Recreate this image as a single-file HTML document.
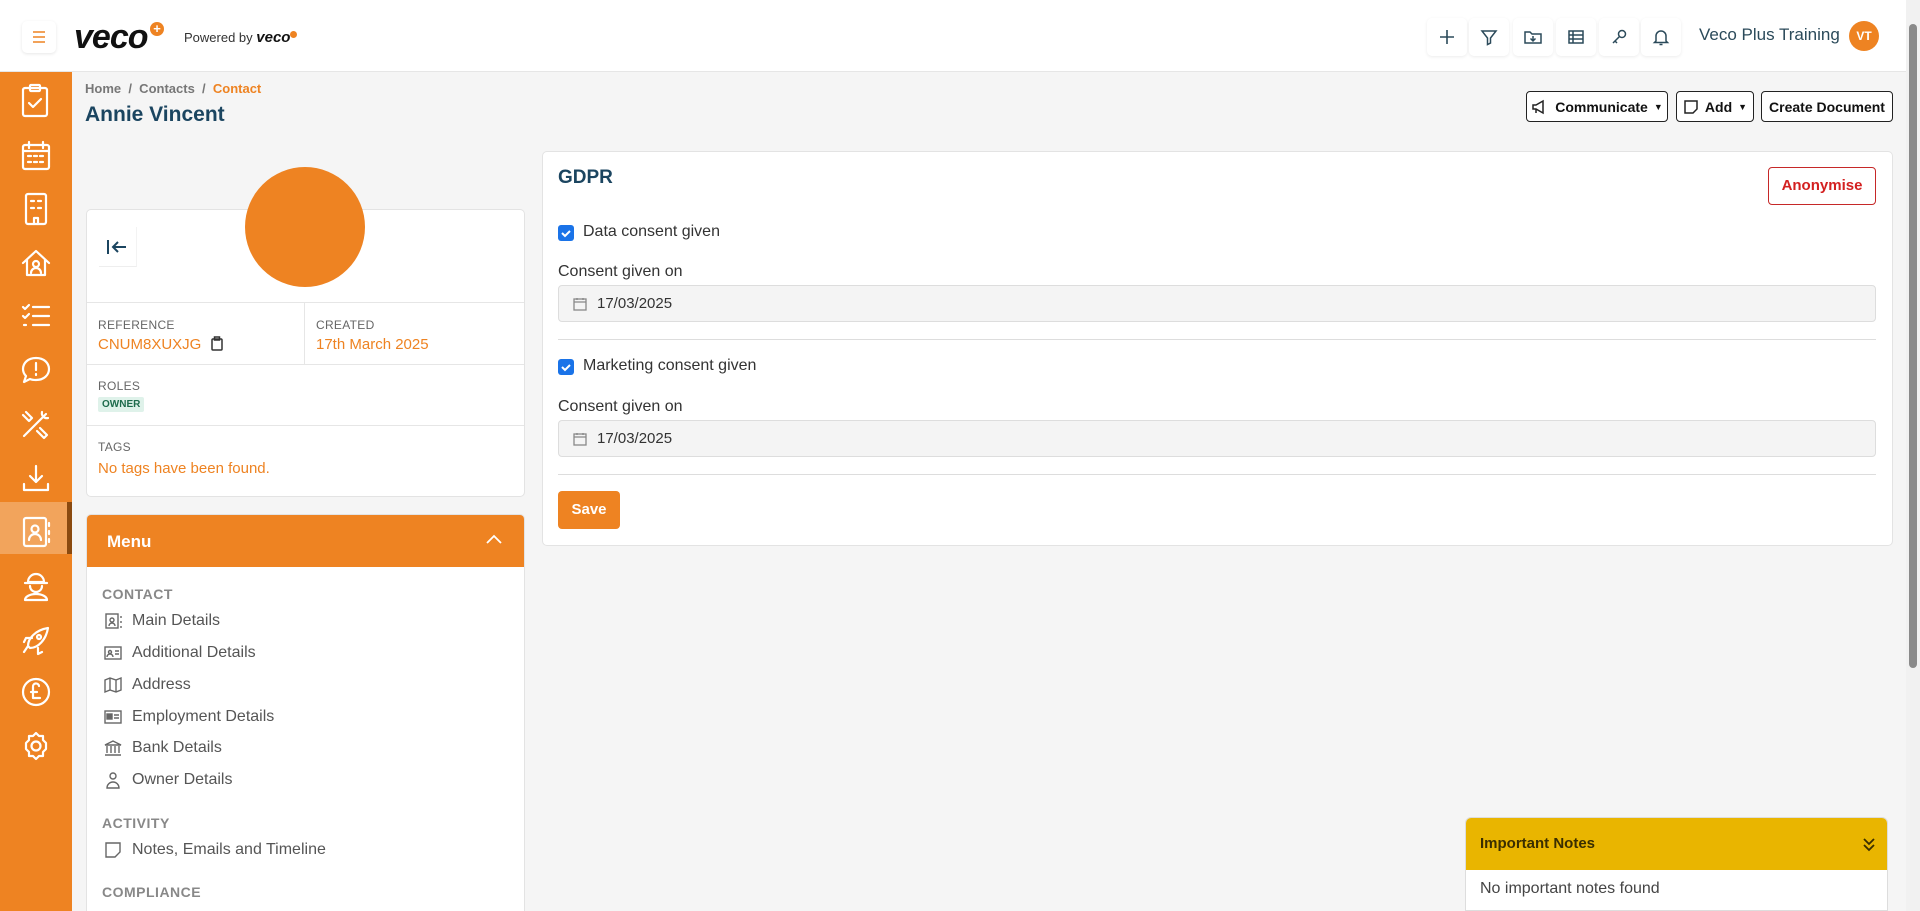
<!DOCTYPE html>
<html style="width:1920px;height:911px;overflow:hidden"><head><meta charset="utf-8"><style>
*{box-sizing:border-box;margin:0;padding:0}
body{width:1920px;height:911px;overflow:hidden;background:#f5f5f5;font-family:"Liberation Sans",sans-serif;position:relative;color:#333}
.a{position:absolute}
.hdr{left:0;top:0;width:1906px;height:72px;background:#fff;border-bottom:1px solid #e6e6e6}
.side{left:0;top:72px;width:72px;height:839px;background:#ee8322}
.ib{position:absolute;top:18px;width:40px;height:38px;background:#fff;border-radius:5px;box-shadow:0 1px 3px rgba(0,0,0,.08)}
.ib svg{position:absolute;left:10px;top:9px}
.card{background:#fff;border:1px solid #e3e3e3;border-radius:5px}
.lbl{font-size:12px;color:#666;letter-spacing:.3px}
.or{color:#ee8322}
.btn{background:#fff;border:1.5px solid #222;border-radius:4px;font-weight:bold;font-size:14px;color:#111;display:flex;align-items:center;justify-content:center;gap:6px}
.mi{position:absolute;left:104px;font-size:16px;color:#555;display:flex;align-items:center;gap:10px}
.mh{position:absolute;left:102px;font-size:14px;color:#888;font-weight:bold;letter-spacing:.5px}
.inp{position:absolute;left:558px;width:1318px;height:37px;background:#f4f4f4;border:1px solid #ddd;border-radius:4px;font-size:15px;color:#333;display:flex;align-items:center;padding-left:14px;gap:10px}
.chk{position:absolute;left:558px;width:16px;height:16px;background:#1a73e8;border-radius:3px}
.hr{position:absolute;left:558px;width:1318px;height:1px;background:#ddd}
</style></head><body>
<div class="a hdr">
 <div class="a" style="left:22px;top:21px;width:34px;height:32px;background:#fff;border-radius:5px;box-shadow:0 1px 3px rgba(0,0,0,.1)">
  <svg width="34" height="32"><path d="M11 11h12M11 16h12M11 21h12" stroke="#ee8322" stroke-width="1.6"/></svg></div>
 <div class="a" style="left:74px;top:18px;font-size:34px;font-weight:bold;font-style:italic;color:#111;letter-spacing:-1px">veco</div>
 <div class="a" style="left:150px;top:22px;width:14px;height:14px;border-radius:50%;background:#ee8322;color:#fff;font-size:13px;line-height:14px;text-align:center;font-weight:bold">+</div>
 <div class="a" style="left:184px;top:29px;font-size:13px;color:#333">Powered by <b style="font-style:italic;font-size:15px;color:#111">veco</b><span style="display:inline-block;width:7px;height:7px;border-radius:50%;background:#ee8322;vertical-align:top;margin-top:2px"></span></div>
 <div class="ib" style="left:1427px"><svg width="20" height="20"><path d="M10 3v14M3 10h14" stroke="#2b4a5a" stroke-width="1.6"/></svg></div>
 <div class="ib" style="left:1469px"><svg width="20" height="20"><path d="M3 4h14l-5.5 7v5l-3 1.5v-6.5z" fill="none" stroke="#2b4a5a" stroke-width="1.5"/></svg></div>
 <div class="ib" style="left:1513px"><svg width="20" height="20"><path d="M2 5v11h16V7H9L7 5z" fill="none" stroke="#2b4a5a" stroke-width="1.5"/><path d="M10 9v5M7.5 11.5 10 14l2.5-2.5" fill="none" stroke="#2b4a5a" stroke-width="1.5"/></svg></div>
 <div class="ib" style="left:1556px"><svg width="20" height="20"><rect x="3" y="4" width="14" height="12" fill="none" stroke="#2b4a5a" stroke-width="1.5"/><path d="M3 8h14M3 12h14M7 4v12" stroke="#2b4a5a" stroke-width="1.5"/></svg></div>
 <div class="ib" style="left:1599px"><svg width="20" height="20"><circle cx="13" cy="7" r="3.5" fill="none" stroke="#2b4a5a" stroke-width="1.5"/><path d="M10.5 9.5 4 16M6 14l2 2" stroke="#2b4a5a" stroke-width="1.5"/></svg></div>
 <div class="ib" style="left:1641px"><svg width="20" height="20"><path d="M5 14V9a5 5 0 0 1 10 0v5l1.5 1.5h-13zM8.5 17.5h3" fill="none" stroke="#2b4a5a" stroke-width="1.5"/></svg></div>
 <div class="a" style="left:1699px;top:25px;font-size:17px;color:#2b4a5a">Veco Plus Training</div>
 <div class="a" style="left:1849px;top:21px;width:30px;height:30px;border-radius:50%;background:#ee8322;color:#fff;font-size:12px;font-weight:bold;text-align:center;line-height:30px">VT</div>
</div>
<div class="a" style="left:1906px;top:0;width:14px;height:911px;background:#f1f1f1"><div class="a" style="left:3px;top:24px;width:8px;height:644px;background:#8a8a8a;border-radius:4px"></div></div>
<div class="a side">
 <div class="a" style="left:0;top:430px;width:72px;height:52px;background:#f2a45c"></div>
 <div class="a" style="left:67px;top:430px;width:5px;height:52px;background:#8a4a10"></div>
 <svg class="a" style="left:0;top:0" width="72" height="839" fill="none" stroke="#fff" stroke-width="2.2" stroke-linecap="round" stroke-linejoin="round">
  <g transform="translate(20,12)"><rect x="3" y="4" width="24" height="28" rx="2"/><rect x="10" y="1" width="10" height="6" rx="1"/><path d="M9 19l4 4 8-8"/></g>
  <g transform="translate(20,68)"><rect x="3" y="5" width="26" height="24" rx="2"/><path d="M3 11h26M9 2v6M23 2v6M8 16h3M14 16h3M20 16h3M8 22h3M14 22h3M20 22h3"/></g>
  <g transform="translate(20,120)"><rect x="6" y="2" width="20" height="30" rx="2"/><path d="M11 9h3M18 9h3M11 16h3M18 16h3M14 32v-6h4v6"/></g>
  <g transform="translate(20,175)"><path d="M3 16 16 4l13 12M7 13v15h18V13"/><circle cx="16" cy="17" r="3"/><path d="M11 26a5 5 0 0 1 10 0"/></g>
  <g transform="translate(20,228)"><path d="M13 7h16M13 16h16M13 25h16M3 7l2 2 4-4M3 16l2 2 4-4M4 25h2"/></g>
  <g transform="translate(20,282)"><path d="M16 4C8 4 3 9 3 15c0 3 1 5 3 7l-2 6 6-3c2 1 4 1 6 1 8 0 13-5 13-11S24 4 16 4z"/><path d="M16 9v7M16 20v1"/></g>
  <g transform="translate(20,336)"><path d="M4 28 26 6M6 4l6 6-3 3-6-6M20 20l7 7-3 3-7-7M22 4a5 5 0 0 0 6 6"/></g>
  <g transform="translate(20,390)"><path d="M16 4v16M10 14l6 6 6-6M4 22v6h24v-6"/></g>
  <g transform="translate(20,443)"><rect x="4" y="3" width="22" height="28" rx="2"/><circle cx="15" cy="14" r="3.5"/><path d="M9 25a6 6 0 0 1 12 0M29 8v3M29 16v3M29 24v3"/></g>
  <g transform="translate(20,498)"><path d="M8 12a8 8 0 0 1 16 0zM5 13h22"/><path d="M10 16a6 6 0 0 0 12 0M5 30a11 6 0 0 1 22 0z"/></g>
  <g transform="translate(20,552)"><path d="M8 22c0-8 8-16 20-18-2 12-10 20-18 20zM8 22l-4 6M12 14H6l-2 4M18 24v6l4-2"/><circle cx="19" cy="13" r="2"/></g>
  <g transform="translate(20,604)"><circle cx="16" cy="16" r="13"/><path d="M19 10a3 3 0 0 0-6 1v11h7M11 16h6"/></g>
  <g transform="translate(20,658)"><circle cx="16" cy="16" r="4.5"/><path d="M16 3l3 3h4v4l3 3v6l-3 3v4h-4l-3 3-3-3H9v-4l-3-3v-6l3-3V6h4z"/></g>
 </svg>
</div>
<div class="a" style="left:85px;top:81px;font-size:13px;color:#777;font-weight:bold">Home &nbsp;/&nbsp; Contacts &nbsp;/&nbsp; <span class="or">Contact</span></div>
<div class="a" style="left:85px;top:103px;font-size:21px;color:#1b4560;font-weight:bold">Annie Vincent</div>
<div class="a btn" style="left:1526px;top:91px;width:142px;height:31px"><svg width="18" height="16" fill="none" stroke="#222" stroke-width="1.5"><path d="M2 6v4h3l7 4V2L5 6zM5 10v4"/></svg>Communicate <span style="font-size:9px">▼</span></div>
<div class="a btn" style="left:1676px;top:91px;width:78px;height:31px"><svg width="16" height="16" fill="none" stroke="#222" stroke-width="1.5"><path d="M2 2h12v8l-4 4H2z"/></svg>Add <span style="font-size:9px">▼</span></div>
<div class="a btn" style="left:1761px;top:91px;width:132px;height:31px">Create Document</div>

<div class="a card" style="left:86px;top:209px;width:439px;height:288px">
 <div class="a" style="left:12px;top:17px;width:38px;height:40px;border-bottom:1px solid #eee;border-right:1px solid #f3f3f3"><svg width="38" height="40" fill="none" stroke="#1b4560" stroke-width="2"><path d="M9 13v14M27 20H14M19 15l-5 5 5 5"/></svg></div>
 <div class="a" style="left:0;top:92px;width:437px;height:1px;background:#e6e6e6"></div>
 <div class="a" style="left:217px;top:92px;width:1px;height:62px;background:#e6e6e6"></div>
 <div class="a lbl" style="left:11px;top:108px">REFERENCE</div>
 <div class="a or" style="left:11px;top:126px;font-size:15px">CNUM8XUXJG <svg width="14" height="15" fill="none" stroke="#333" stroke-width="1.5" style="vertical-align:-2px;margin-left:4px"><rect x="2" y="3" width="10" height="11" rx="1"/><rect x="4.5" y="1" width="5" height="3"/></svg></div>
 <div class="a lbl" style="left:229px;top:108px">CREATED</div>
 <div class="a or" style="left:229px;top:126px;font-size:15px">17th March 2025</div>
 <div class="a" style="left:0;top:154px;width:437px;height:1px;background:#e6e6e6"></div>
 <div class="a lbl" style="left:11px;top:169px">ROLES</div>
 <div class="a" style="left:11px;top:187px;padding:2px 4px;background:#dff2ea;color:#1e6b4c;font-size:10px;font-weight:bold;border-radius:2px">OWNER</div>
 <div class="a" style="left:0;top:215px;width:437px;height:1px;background:#e6e6e6"></div>
 <div class="a lbl" style="left:11px;top:230px">TAGS</div>
 <div class="a or" style="left:11px;top:250px;font-size:15px">No tags have been found.</div>
</div>
<div class="a" style="left:245px;top:167px;width:120px;height:120px;border-radius:50%;background:#ee8322"></div>

<div class="a card" style="left:86px;top:514px;width:439px;height:410px;overflow:hidden">
 <div class="a" style="left:0;top:0;width:439px;height:52px;background:#ee8322;color:#fff;font-size:17px;font-weight:bold;padding:17px 20px">Menu
  <svg class="a" style="left:398px;top:18px" width="18" height="12" fill="none" stroke="#fff" stroke-width="1.8"><path d="M2 10l7-7 7 7"/></svg></div>
</div>
<div class="mh" style="top:586px">CONTACT</div>
<div class="mi" style="top:612px"><svg width="18" height="18" fill="none" stroke="#666" stroke-width="1.4"><rect x="2" y="2" width="12" height="14"/><circle cx="8" cy="8" r="2"/><path d="M5 14a3 3 0 0 1 6 0M17 4v2M17 9v2M17 14v2"/></svg>Main Details</div>
<div class="mi" style="top:644px"><svg width="18" height="18" fill="none" stroke="#666" stroke-width="1.4"><rect x="1" y="3" width="16" height="12"/><circle cx="6" cy="8" r="1.5"/><path d="M3 13a3 3 0 0 1 6 0M11 7h4M11 10h4"/></svg>Additional Details</div>
<div class="mi" style="top:676px"><svg width="18" height="18" fill="none" stroke="#666" stroke-width="1.4"><path d="M1 4l5-2 6 2 5-2v12l-5 2-6-2-5 2zM6 2v12M12 4v12"/></svg>Address</div>
<div class="mi" style="top:708px"><svg width="18" height="18" fill="none" stroke="#666" stroke-width="1.4"><rect x="1" y="3" width="16" height="12"/><rect x="3" y="6" width="5" height="5" fill="#666"/><path d="M10 7h5M10 10h5"/></svg>Employment Details</div>
<div class="mi" style="top:739px"><svg width="18" height="18" fill="none" stroke="#666" stroke-width="1.4"><path d="M1 6l8-4 8 4zM3 7v7M7 7v7M11 7v7M15 7v7M1 16h16"/></svg>Bank Details</div>
<div class="mi" style="top:771px"><svg width="18" height="18" fill="none" stroke="#666" stroke-width="1.4"><circle cx="9" cy="5" r="3"/><path d="M3 17a6 6 0 0 1 12 0z"/></svg>Owner Details</div>
<div class="mh" style="top:815px">ACTIVITY</div>
<div class="mi" style="top:841px"><svg width="18" height="18" fill="none" stroke="#666" stroke-width="1.4"><path d="M2 2h14v9l-5 5H2z"/></svg>Notes, Emails and Timeline</div>
<div class="mh" style="top:884px">COMPLIANCE</div>

<div class="a card" style="left:542px;top:151px;width:1351px;height:395px"></div>
<div class="a" style="left:558px;top:167px;font-size:19px;font-weight:bold;color:#1b4560">GDPR</div>
<div class="a" style="left:1768px;top:167px;width:108px;height:38px;border:1px solid #c62828;border-radius:4px;color:#d32020;font-weight:bold;font-size:15px;text-align:center;line-height:36px">Anonymise</div>
<div class="chk" style="top:225px"><svg width="16" height="16" fill="none" stroke="#fff" stroke-width="2"><path d="M4 8l3 3 5-5"/></svg></div>
<div class="a" style="left:583px;top:223px;font-size:16px;color:#333">Data consent given</div>
<div class="a" style="left:558px;top:263px;font-size:16px;color:#333">Consent given on</div>
<div class="inp" style="top:285px"><svg width="14" height="14" fill="none" stroke="#888" stroke-width="1.3"><rect x="1" y="2" width="12" height="11"/><path d="M1 5h12M4 1v2M10 1v2"/></svg>17/03/2025</div>
<div class="hr" style="top:339px"></div>
<div class="chk" style="top:359px"><svg width="16" height="16" fill="none" stroke="#fff" stroke-width="2"><path d="M4 8l3 3 5-5"/></svg></div>
<div class="a" style="left:583px;top:357px;font-size:16px;color:#333">Marketing consent given</div>
<div class="a" style="left:558px;top:398px;font-size:16px;color:#333">Consent given on</div>
<div class="inp" style="top:420px"><svg width="14" height="14" fill="none" stroke="#888" stroke-width="1.3"><rect x="1" y="2" width="12" height="11"/><path d="M1 5h12M4 1v2M10 1v2"/></svg>17/03/2025</div>
<div class="hr" style="top:474px"></div>
<div class="a" style="left:558px;top:491px;width:62px;height:38px;background:#ee8322;border-radius:4px;color:#fff;font-weight:bold;font-size:15px;text-align:center;line-height:38px">Save</div>

<div class="a" style="left:1465px;top:817px;width:423px;height:94px;background:#fff;border:1px solid #ddd;border-radius:6px 6px 0 0;overflow:hidden">
 <div style="height:52px;background:#e9b500;padding:17px 14px;font-weight:bold;font-size:15px;color:#3a2e00">Important Notes
  <svg class="a" style="left:396px;top:18px" width="14" height="16" fill="none" stroke="#3a2e00" stroke-width="1.8"><path d="M2 3l5 5 5-5M2 9l5 5 5-5"/></svg></div>
 <div style="padding:10px 14px;font-size:16px;color:#444">No important notes found</div>
</div>
</body></html>
